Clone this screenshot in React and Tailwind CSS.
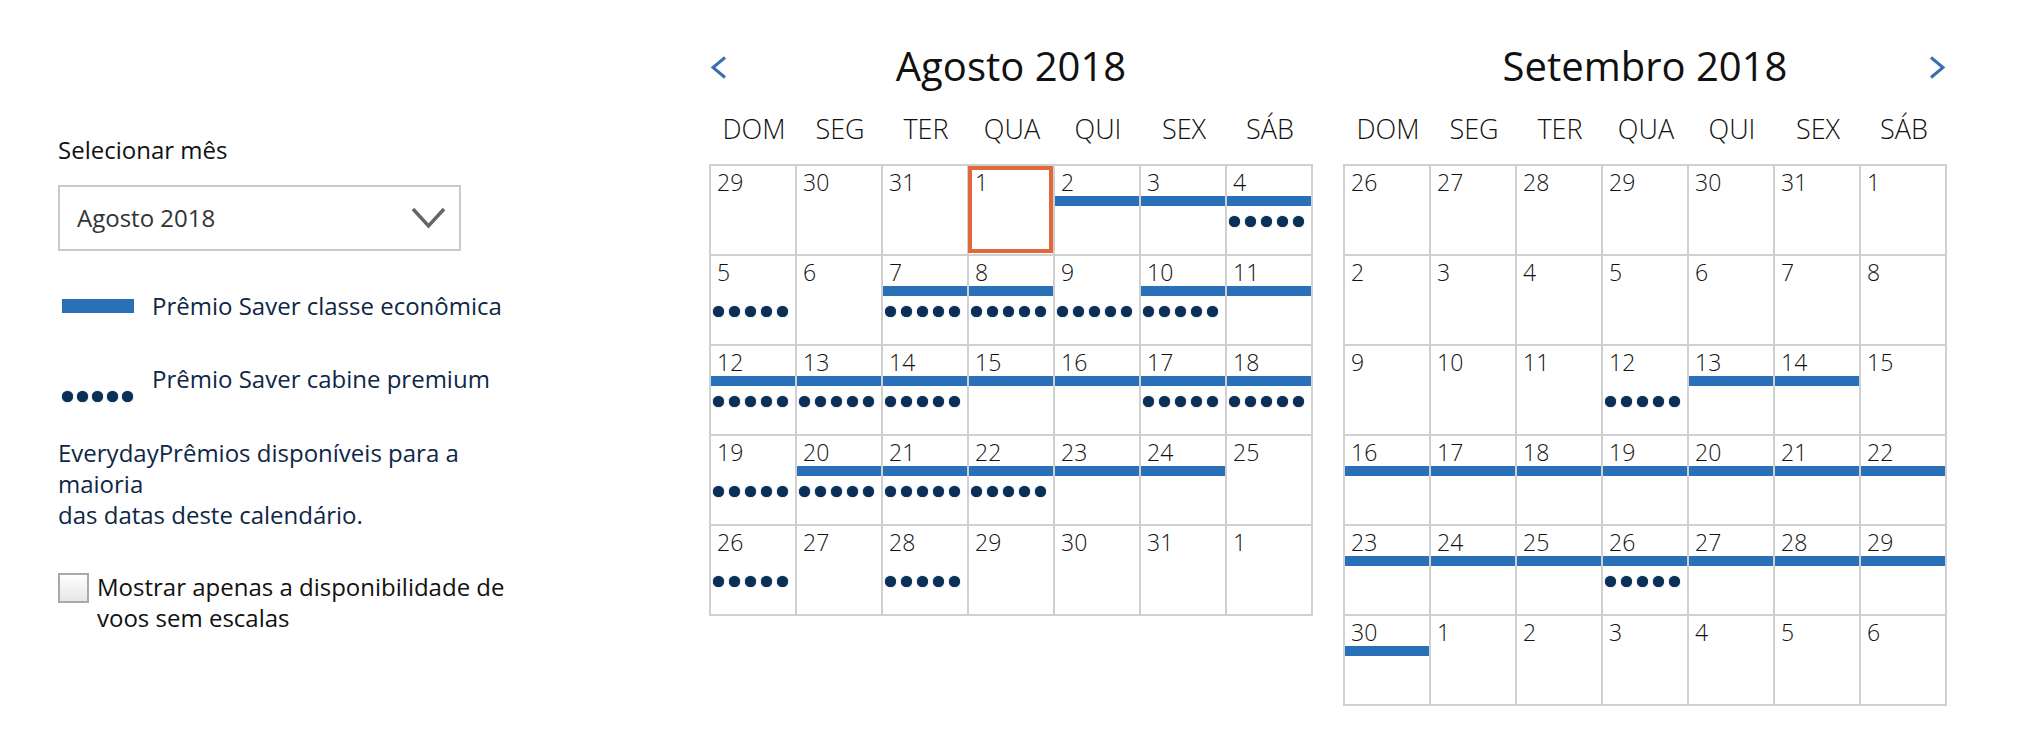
import React from "react";

const FONT = { fontFamily: '"Open Sans", "Noto Sans", sans-serif' };

const aug = [
  [29, ""], [30, ""], [31, ""], [1, "s"], [2, "b"], [3, "b"], [4, "bd"],
  [5, "d"], [6, ""], [7, "bd"], [8, "bd"], [9, "d"], [10, "bd"], [11, "b"],
  [12, "bd"], [13, "bd"], [14, "bd"], [15, "b"], [16, "b"], [17, "bd"], [18, "bd"],
  [19, "d"], [20, "bd"], [21, "bd"], [22, "bd"], [23, "b"], [24, "b"], [25, ""],
  [26, "d"], [27, ""], [28, "d"], [29, ""], [30, ""], [31, ""], [1, ""],
];

const sep = [
  [26, ""], [27, ""], [28, ""], [29, ""], [30, ""], [31, ""], [1, ""],
  [2, ""], [3, ""], [4, ""], [5, ""], [6, ""], [7, ""], [8, ""],
  [9, ""], [10, ""], [11, ""], [12, "d"], [13, "b"], [14, "b"], [15, ""],
  [16, "b"], [17, "b"], [18, "b"], [19, "b"], [20, "b"], [21, "b"], [22, "b"],
  [23, "b"], [24, "b"], [25, "b"], [26, "bd"], [27, "b"], [28, "b"], [29, "b"],
  [30, "b"], [1, ""], [2, ""], [3, ""], [4, ""], [5, ""], [6, ""],
];

const days = ["DOM", "SEG", "TER", "QUA", "QUI", "SEX", "SÁB"];

function Dots({ className = "" }) {
  return (
    <div className={`flex gap-[5px] ${className}`}>
      {[0, 1, 2, 3, 4].map((i) => (
        <div
          key={i}
          className="w-[11px] h-[11px] rounded-full bg-[#0b3058] shadow-[0_0_1px_#0b3058]"
        />
      ))}
    </div>
  );
}

function Cell({ n, flags }) {
  const bar = flags.includes("b");
  const dots = flags.includes("d");
  const sel = flags.includes("s");
  return (
    <div className="relative h-[90px] border-r-2 border-b-2 border-[#d0d0d0]">
      <div className="h-[30px] pt-[3px] pl-[6px] text-[23px] font-light leading-[27px] text-[#111]">
        {n}
      </div>
      <div className={bar ? "h-[10px] bg-[#2a70b8]" : "h-[10px]"} />
      {dots && <Dots className="mt-[10px] pl-[2px]" />}
      {sel && (
        <div className="absolute -left-[1px] top-0 right-0 bottom-[1px] border-[4px] border-[#e1683a]" />
      )}
    </div>
  );
}

function ChevronLeft() {
  return (
    <svg width="17" height="23" viewBox="0 0 17 23" fill="none">
      <path d="M15 1.5 L3 11.5 L15 21.5" stroke="#3b6fab" strokeWidth="3" />
    </svg>
  );
}

function ChevronRight() {
  return (
    <svg width="17" height="23" viewBox="0 0 17 23" fill="none">
      <path d="M2 1.5 L14 11.5 L2 21.5" stroke="#3b6fab" strokeWidth="3" />
    </svg>
  );
}

function Calendar({ title, data, left, right }) {
  return (
    <div className="w-[604px]">
      <div className="flex items-center h-[48px]">
        <div className="w-[17px] mt-[3px] ml-[1px]">{left && <ChevronLeft />}</div>
        <div className="flex-1 text-center text-[40px] leading-[48px] text-[#111]">
          {title}
        </div>
        <div className="w-[17px] mt-[3px] mr-[1px]">{right && <ChevronRight />}</div>
      </div>
      <div className="mt-[21px] pl-[2px] grid grid-cols-[repeat(7,86px)]">
        {days.map((d) => (
          <div key={d} className="text-center text-[27px] font-light leading-[36px] text-[#111]">
            {d}
          </div>
        ))}
      </div>
      <div className="mt-[17px] grid grid-cols-[repeat(7,86px)] border-l-2 border-t-2 border-[#d0d0d0] w-[604px]">
        {data.map(([n, f], i) => (
          <Cell key={i} n={n} flags={f} />
        ))}
      </div>
    </div>
  );
}

export default function App() {
  return (
    <div className="w-full min-h-[736px] bg-white flex" style={FONT}>
      <div className="w-[709px] shrink-0 pl-[58px] pt-[134px]">
        <div className="text-[24px] leading-[32px] text-[#111]">Selecionar mês</div>
        <div className="mt-[19px] w-[403px] h-[66px] border-2 border-[#c9c9c9] flex items-center justify-between pl-[17px] pr-[13px]">
          <span className="text-[24px] leading-[32px] text-[#333]">Agosto 2018</span>
          <svg width="35" height="22" viewBox="0 0 35 22" fill="none">
            <path d="M2 2 L17.5 19 L33 2" stroke="#666" strokeWidth="3.5" />
          </svg>
        </div>
        <div className="mt-[39px] flex items-center">
          <div className="ml-[4px] w-[72px] h-[14px] bg-[#2a70b8]" />
          <span className="ml-[18px] text-[24px] leading-[32px] text-[#0e2746]">
            Prêmio Saver classe econômica
          </span>
        </div>
        <div className="mt-[41px] flex items-start">
          <Dots className="ml-[4px] mt-[28px] w-[72px] !gap-[4px]" />
          <span className="ml-[18px] text-[24px] leading-[32px] text-[#0e2746]">
            Prêmio Saver cabine premium
          </span>
        </div>
        <div className="mt-[35px] text-[24px] leading-[31px] text-[#0e2746] whitespace-nowrap">
          EverydayPrêmios disponíveis para a
          <br />
          maioria
          <br />
          das datas deste calendário.
        </div>
        <div className="mt-[41px] flex items-start">
          <div className="mt-[2px] w-[31px] h-[30px] shrink-0 border-2 border-[#a9a9a9] bg-gradient-to-b from-white to-[#e6e6e6]" />
          <div className="ml-[8px] text-[24px] leading-[31px] text-[#111] whitespace-nowrap">
            Mostrar apenas a disponibilidade de
            <br />
            voos sem escalas
          </div>
        </div>
      </div>
      <div className="flex gap-[30px] pt-[42px]">
        <Calendar title="Agosto 2018" data={aug} left />
        <Calendar title="Setembro 2018" data={sep} right />
      </div>
    </div>
  );
}
